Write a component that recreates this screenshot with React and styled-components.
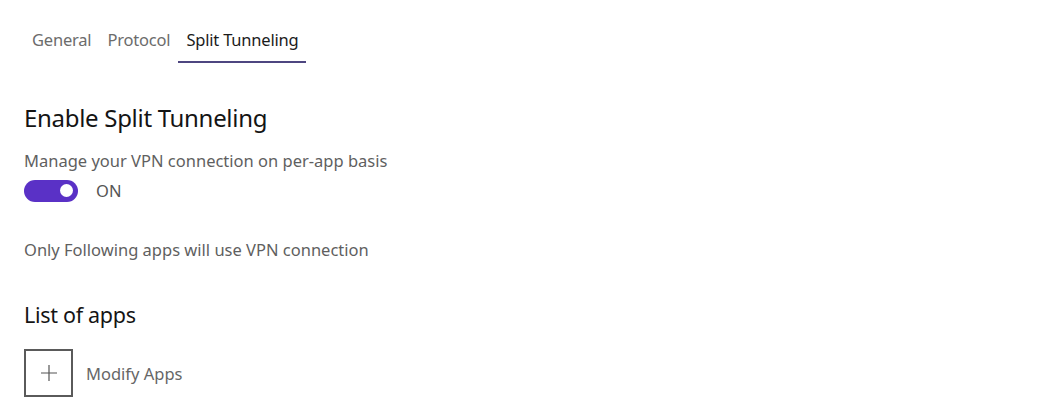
import styled, { createGlobalStyle } from "styled-components";

const GlobalStyle = createGlobalStyle`
  body {
    margin: 0;
    background: #ffffff;
    font-family: "Noto Sans", "Open Sans", sans-serif;
    color: #1b1b1b;
  }
`;

const Page = styled.div`
  padding: 24px 24px 0 24px;
`;

const Tabs = styled.nav`
  display: flex;
`;

const Tab = styled.div`
  font-size: 16.5px;
  padding: 4px 8px 10px 8px;
  color: ${(p) => (p.$active ? "#1b1b1b" : "#6c6c6c")};
  border-bottom: 2px solid ${(p) => (p.$active ? "#4e4680" : "transparent")};
  letter-spacing: -0.2px;
`;

const Section = styled.section`
  display: flex;
  flex-direction: column;
  align-items: flex-start;
`;

const Heading = styled.h2`
  margin: 0;
  font-weight: 400;
  font-size: ${(p) => p.$size || 24}px;
  line-height: 32px;
  color: #141414;
  letter-spacing: -0.3px;
`;

const Note = styled.p`
  margin: 0;
  font-size: 16.5px;
  line-height: 22px;
  color: #5f5f5f;
`;

const ToggleRow = styled.div`
  display: flex;
  align-items: center;
  gap: 18px;
  margin-top: 7px;
`;

const Track = styled.div`
  width: 54px;
  height: 22px;
  border-radius: 11px;
  background: #5a31c6;
  display: flex;
  align-items: center;
  justify-content: flex-end;
  padding-right: 5px;
  box-sizing: border-box;
`;

const Thumb = styled.span`
  width: 13px;
  height: 13px;
  border-radius: 50%;
  background: #ffffff;
`;

const ToggleLabel = styled.span`
  font-size: 16.5px;
  color: #555;
`;

const AddRow = styled.div`
  display: flex;
  align-items: center;
  gap: 13px;
  margin-top: 18px;
`;

const AddBox = styled.div`
  width: 49px;
  height: 48px;
  box-sizing: border-box;
  border: 2px solid #5a5a5a;
  display: flex;
  align-items: center;
  justify-content: center;
`;

const AddLabel = styled.span`
  font-size: 16.5px;
  color: #666;
`;

export default function App() {
  return (
    <>
      <GlobalStyle />
      <Page>
        <Tabs>
          <Tab>General</Tab>
          <Tab>Protocol</Tab>
          <Tab $active>Split Tunneling</Tab>
        </Tabs>

        <Section style={{ marginTop: 39 }}>
          <Heading>Enable Split Tunneling</Heading>
          <Note style={{ marginTop: 16 }}>
            Manage your VPN connection on per-app basis
          </Note>
          <ToggleRow>
            <Track>
              <Thumb />
            </Track>
            <ToggleLabel>ON</ToggleLabel>
          </ToggleRow>
          <Note style={{ marginTop: 37 }}>
            Only Following apps will use VPN connection
          </Note>
        </Section>

        <Section style={{ marginTop: 38 }}>
          <Heading $size={21.5}>List of apps</Heading>
          <AddRow>
            <AddBox>
              <svg width="18" height="18" viewBox="0 0 18 18">
                <path d="M9 1v16M1 9h16" stroke="#555" strokeWidth="1.2" />
              </svg>
            </AddBox>
            <AddLabel>Modify Apps</AddLabel>
          </AddRow>
        </Section>
      </Page>
    </>
  );
}
